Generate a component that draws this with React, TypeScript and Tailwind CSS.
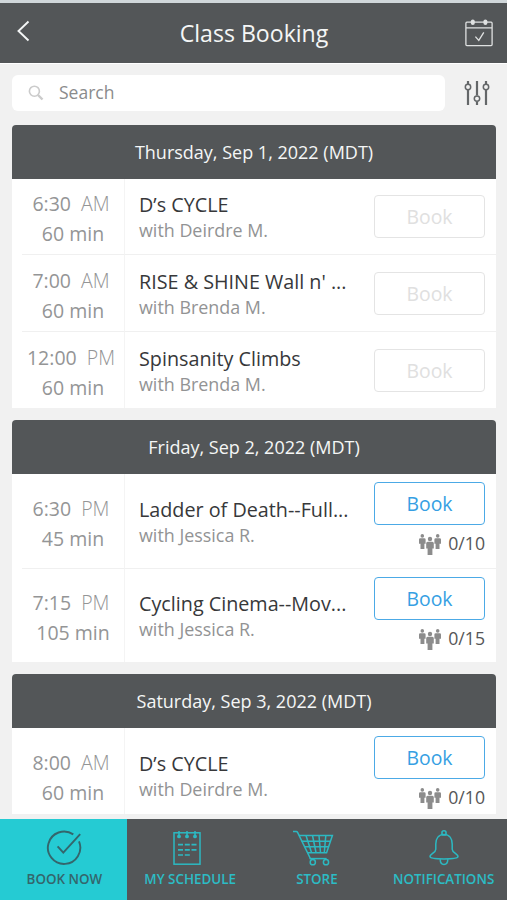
import type { ReactNode } from "react";

type ClassItem = {
  time: string;
  period: "AM" | "PM";
  duration: string;
  title: string;
  teacher: string;
  spots?: string;
  height: string;
};

type Day = {
  label: string;
  items: ClassItem[];
};

const days: Day[] = [
  {
    label: "Thursday, Sep 1, 2022 (MDT)",
    items: [
      { time: "6:30", period: "AM", duration: "60 min", title: "D’s CYCLE", teacher: "Deirdre M.", height: "h-[76px]" },
      { time: "7:00", period: "AM", duration: "60 min", title: "RISE & SHINE Wall n' ...", teacher: "Brenda M.", height: "h-[77px]" },
      { time: "12:00", period: "PM", duration: "60 min", title: "Spinsanity Climbs", teacher: "Brenda M.", height: "h-[76px]" },
    ],
  },
  {
    label: "Friday, Sep 2, 2022 (MDT)",
    items: [
      { time: "6:30", period: "PM", duration: "45 min", title: "Ladder of Death--Full...", teacher: "Jessica R.", spots: "0/10", height: "h-[95px]" },
      { time: "7:15", period: "PM", duration: "105 min", title: "Cycling Cinema--Mov...", teacher: "Jessica R.", spots: "0/15", height: "h-[93px]" },
    ],
  },
  {
    label: "Saturday, Sep 3, 2022 (MDT)",
    items: [
      { time: "8:00", period: "AM", duration: "60 min", title: "D’s CYCLE", teacher: "Deirdre M.", spots: "0/10", height: "h-[95px]" },
    ],
  },
];

function BackIcon() {
  return (
    <svg width="13" height="22" viewBox="0 0 13 22" fill="none" stroke="#f4f6f6" strokeWidth="1.9">
      <path d="M11.5 1.5L1.5 11l10 9.5" />
    </svg>
  );
}

function CalendarIcon() {
  return (
    <svg width="28" height="28" viewBox="0 0 28 28" fill="none" stroke="#dfe1e1" strokeWidth="1.3">
      <rect x="0.9" y="3.2" width="26.2" height="23.4" rx="1" />
      <path d="M1 8.9h26M10.4 17.6l3.4 3.8 5-8" />
      <g fill="#dfe1e1" stroke="none">
        <rect x="5.8" y="0.6" width="4" height="5.4" rx="2" />
        <rect x="18.4" y="0.6" width="4" height="5.4" rx="2" />
      </g>
    </svg>
  );
}

function SearchIcon() {
  return (
    <svg width="16" height="16" viewBox="0 0 16 16" fill="none" stroke="#cbcbcb">
      <circle cx="6.4" cy="6.2" r="5" strokeWidth="1.6" />
      <path d="M10 10l4.5 4.5" strokeWidth="2.4" />
    </svg>
  );
}

function FilterIcon() {
  return (
    <svg width="26" height="26" viewBox="0 0 26 26" fill="none" stroke="#646769">
      <path d="M4 1v3M4 10v15M13 1v14.5M13 21.5V25M22 1v3M22 10v15" strokeWidth="2.2" />
      <g strokeWidth="1.5">
        <circle cx="4" cy="7" r="2.7" />
        <circle cx="13" cy="18.6" r="2.7" />
        <circle cx="22" cy="7" r="2.7" />
      </g>
    </svg>
  );
}

function PeopleIcon() {
  return (
    <svg className="mt-1" width="22" height="22" viewBox="0 0 22 22" fill="#8c8c8c">
      <circle cx="3.3" cy="1.9" r="1.8" />
      <path d="M1.3 4.2h4q1.3 0 1.3 1.3v4.2H5.4V15H1.5V9.7H0V5.5q0-1.3 1.3-1.3z" />
      <circle cx="18.7" cy="1.9" r="1.8" />
      <path d="M16.7 4.2h4q1.3 0 1.3 1.3v4.2h-1.5V15h-3.9V9.7h-1.2V5.5q0-1.3 1.3-1.3z" />
      <circle cx="11" cy="5" r="2.2" />
      <path d="M8.7 7.8h4.6q1.5 0 1.5 1.5v5.2h-1.4V21H8.6v-6.5H7.2V9.3q0-1.5 1.5-1.5z" />
    </svg>
  );
}

function BookNowIcon() {
  return (
    <svg width="36" height="36" viewBox="0 0 36 36" fill="none" stroke="#34666c" strokeWidth="1.9">
      <path d="M27.3 4.4A16.2 16.2 0 1 0 33 11.4" />
      <path d="M11.6 16.4l5.7 6.3L34.2 4.2" />
    </svg>
  );
}

function ScheduleIcon() {
  return (
    <svg className="mr-[7px]" width="28" height="36" viewBox="0 0 28 36" fill="none" stroke="#2cb9c2" strokeWidth="1.5">
      <rect x="1" y="2.8" width="26" height="31.4" />
      <path d="M6 1v6M14 1v6M22 1v6" />
      <g fill="#2cb9c2" stroke="none">
        <circle cx="6" cy="6.4" r="1.9" />
        <circle cx="14" cy="6.4" r="1.9" />
        <circle cx="22" cy="6.4" r="1.9" />
      </g>
      <path d="M5 14.6h5M11.8 14.6h5M18.5 14.6h5M5 19.8h5M11.8 19.8h5M18.5 19.8h5M5 25h5M11.8 25h5" strokeWidth="1.7" />
    </svg>
  );
}

function CartIcon() {
  return (
    <svg className="mr-2" width="42" height="36" viewBox="0 0 42 36" fill="none" stroke="#2cb9c2" strokeWidth="1.5">
      <path d="M1 1.6h3.2q1 0 1.5 1L18.6 29" />
      <path d="M7 5.6h33.4L34.6 22.8H15.6" />
      <path d="M9.5 11.2h29M12.5 16.8h24M14 5.5l5.5 17M20.5 5.5l3.5 17M27 5.5l1.5 17M33.8 5.5l-1.5 17" />
      <path d="M17.6 28.6h17" />
      <circle cx="20.8" cy="32.2" r="2.6" />
      <circle cx="34" cy="32.2" r="2.6" />
    </svg>
  );
}

function BellIcon() {
  return (
    <svg width="30" height="36" viewBox="0 0 30 36" fill="none" stroke="#2cb9c2" strokeWidth="1.5">
      <circle cx="15" cy="2.9" r="2.1" />
      <path d="M15 4.4C9.6 4.4 6.8 8.6 6.8 14v5.2c0 3.6-5.8 4.6-5.8 7.4 0 1.6 5.6 2.4 14 2.4s14-.8 14-2.4c0-2.8-5.8-3.8-5.8-7.4V14c0-5.4-2.8-9.6-8.2-9.6z" />
      <path d="M11.2 29.2c0 3.4 1.5 5.2 3.8 5.2s3.8-1.8 3.8-5.2" />
    </svg>
  );
}

function ClassRow({ item, last }: { item: ClassItem; last: boolean }) {
  return (
    <li className={`flex pl-[10px] ${item.height}`}>
      <div
        className={`flex w-[103px] shrink-0 flex-col justify-center border-r border-[#f4f4f4] pt-[5px] pr-1 text-center text-[#949596] ${last ? "" : "border-b border-b-[#f0f0f0]"}`}
      >
        <p className="text-[19.5px] leading-[30px] whitespace-nowrap">
          {item.time} <span className="ml-[5px] font-light">{item.period}</span>
        </p>
        <p className="pl-1 text-[19.5px] leading-[30px] whitespace-nowrap">{item.duration}</p>
      </div>

      <div className={`flex grow ${last ? "" : "border-b border-[#f0f0f0]"}`}>
        <div className="flex w-[249px] shrink-0 flex-col justify-center pt-px pl-[14px]">
          <h3 className="text-[19.75px] leading-[26px] whitespace-nowrap text-[#37383a]">{item.title}</h3>
          <p className="text-[17.9px] leading-6 whitespace-nowrap text-[#929394]">with {item.teacher}</p>
        </div>

        <div className={`flex w-[111px] flex-col items-end ${item.spots ? "pt-2" : "justify-center"}`}>
          <button
            type="button"
            disabled={!item.spots}
            className="h-[43px] w-full shrink-0 rounded border-[1.5px] border-[#4caae6] pt-px text-[19.4px] text-[#369fe3] disabled:border-[#e4e4e4] disabled:text-[#e0e0e0]"
          >
            Book
          </button>
          {item.spots && (
            <div className="mt-1 flex h-7 items-center gap-[7px] text-[17.7px] leading-7 text-[#555657]">
              <PeopleIcon />
              <span>{item.spots}</span>
            </div>
          )}
        </div>
      </div>
    </li>
  );
}

function DaySection({ day }: { day: Day }) {
  return (
    <section className="shrink-0 overflow-hidden rounded-t bg-white">
      <h2 className="flex h-[54px] items-center justify-center bg-[#535658] text-[18px] text-[#f5f6f6]">
        {day.label}
      </h2>
      <ul>
        {day.items.map((item, i) => (
          <ClassRow key={item.time + item.period} item={item} last={i === day.items.length - 1} />
        ))}
      </ul>
    </section>
  );
}

function NavItem({ icon, label, active }: { icon: ReactNode; label: string; active?: boolean }) {
  return (
    <button
      type="button"
      className={`flex flex-col items-center pt-[11px] text-[13.4px] font-semibold whitespace-nowrap ${active ? "bg-[#25cbd3] pl-0.5 text-[#34666c]" : "text-[#2cbcc5]"}`}
    >
      {icon}
      <span className="mt-[3px] leading-5">{label}</span>
    </button>
  );
}

export default function App() {
  return (
    <div className="flex h-[900px] w-[507px] flex-col overflow-hidden bg-[#f1f1f1] font-['Open_Sans','Noto_Sans',sans-serif]">
      <header className="flex h-[63px] shrink-0 items-center justify-between border-t-[3px] border-[#d0d7da] bg-[#535658] pr-[14px] pl-[17px]">
        <button type="button" aria-label="Back" className="mb-1 w-[26px]">
          <BackIcon />
        </button>
        <h1 className="text-[23.1px] leading-8 text-[#f5f6f6]">Class Booking</h1>
        <button type="button" aria-label="My calendar" className="-mt-px">
          <CalendarIcon />
        </button>
      </header>

      {/* Search and filters */}
      <div className="flex h-[62px] shrink-0 items-center border-t border-white pr-[17px] pb-1 pl-3">
        <label className="flex h-9 w-[433px] items-center gap-[15px] rounded-md bg-white pl-4">
          <SearchIcon />
          <span className="text-[17.5px] text-[#8a8b8c]">Search</span>
        </label>
        <button type="button" aria-label="Filters" className="ml-auto">
          <FilterIcon />
        </button>
      </div>

      {/* Class list */}
      <main className="mr-[11px] ml-3 flex h-[689px] shrink-0 flex-col gap-3 overflow-hidden">
        {days.map((day) => (
          <DaySection key={day.label} day={day} />
        ))}
      </main>

      {/* Tab bar */}
      <nav className="mt-auto grid h-[81px] shrink-0 grid-cols-4 bg-[#535658]">
        <NavItem icon={<BookNowIcon />} label="BOOK NOW" active />
        <NavItem icon={<ScheduleIcon />} label="MY SCHEDULE" />
        <NavItem icon={<CartIcon />} label="STORE" />
        <NavItem icon={<BellIcon />} label="NOTIFICATIONS" />
      </nav>
    </div>
  );
}
